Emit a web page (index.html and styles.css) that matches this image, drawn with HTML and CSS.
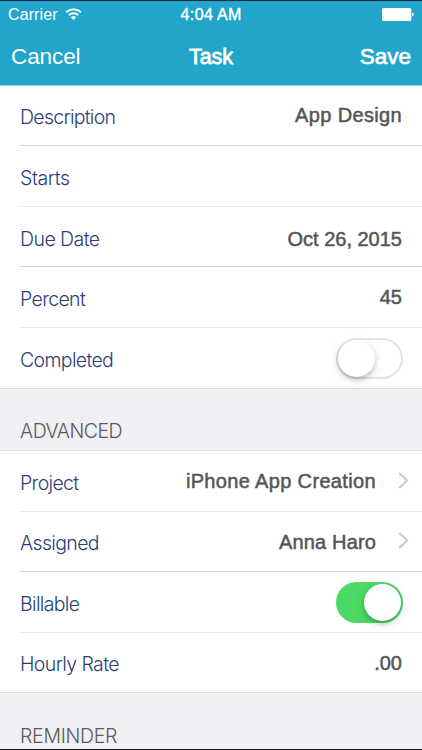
FILE: index.html
```html
<!DOCTYPE html>
<html lang="en">
<head>
<meta charset="utf-8">
<title>Task</title>
<link rel="stylesheet" href="styles.css">
</head>
<body>
<main class="screen">
  <header class="top">
    <div class="status">
      <span class="carrier">Carrier</span>
      <svg class="wifi" width="17" height="13" viewBox="0 0 17 13" fill="none" stroke="#fff" stroke-width="1.8"><path d="M1.1 4.4a10.5 10.5 0 0 1 14.8 0M3.8 7.2a6.6 6.6 0 0 1 9.4 0"/><path d="M5.9 9.4a3.7 3.7 0 0 1 5.2 0L8.5 12z" fill="#fff" stroke="none"/></svg>
      <span class="time">4:04 AM</span>
      <svg class="battery" width="32" height="13" viewBox="0 0 32 13" fill="#fff"><rect width="29.3" height="13" rx="1.5"/><path d="M30 4.5q2 .4 2 2t-2 2z"/></svg>
    </div>
    <nav class="nav">
      <span class="cancel">Cancel</span>
      <h1 class="title">Task</h1>
      <span class="save">Save</span>
    </nav>
  </header>
  <section class="group">
    <div class="row first strong"><span class="label description">Description</span><span class="value top-value">App Design</span></div>
    <div class="row"><span class="label starts">Starts</span></div>
    <div class="row short strong"><span class="label due">Due Date</span><span class="value number date">Oct 26, 2015</span></div>
    <div class="row"><span class="label">Percent</span><span class="value raised number">45</span></div>
    <div class="row last"><span class="label">Completed</span><span class="switch"><span class="knob"></span></span></div>
  </section>
  <h2 class="section"><span class="advanced">ADVANCED</span></h2>
  <section class="group">
    <div class="row"><span class="label">Project</span><span class="value link">iPhone App Creation</span><svg class="chevron" width="11" height="17" viewBox="0 0 11 17"><path d="M1.2 1l8 7.5-8 7.5"/></svg></div>
    <div class="row short strong"><span class="label">Assigned</span><span class="value link anna">Anna Haro</span><svg class="chevron" width="11" height="17" viewBox="0 0 11 17"><path d="M1.2 1l8 7.5-8 7.5"/></svg></div>
    <div class="row"><span class="label">Billable</span><span class="switch on"><span class="knob"></span></span></div>
    <div class="row short last"><span class="label hourly">Hourly Rate</span><span class="value raised number">.00</span></div>
  </section>
  <h2 class="section end"><span>REMINDER</span></h2>
</main>
</body>
</html>
```
FILE: styles.css
```css
* { box-sizing: border-box; }
body { margin: 0; font-family: Inter, "Liberation Sans", sans-serif; background: #fff; }
.screen { width: 422px; height: 750px; overflow: hidden; border-top: 1px solid #122c40; border-bottom: 1px solid #17171d; }
.top { height: 85px; background: #21a5ca; border-bottom: 1px solid #8fd1e5; color: #fff; font-family: "Liberation Sans", Arial, sans-serif; }
.status { height: 28px; padding: 0 8px; display: grid; grid-template-columns: auto 17px 1fr auto 32px; align-items: center; font-size: 16px; }
.carrier { font-size: 16px; letter-spacing: .1px; }
.wifi { margin-left: 7px; margin-top: -2px; }
.time { grid-column: 3; justify-self: start; margin-left: 106px; font-size: 16px; letter-spacing: .35px; -webkit-text-stroke: .4px #fff; white-space: nowrap; }
.battery { grid-column: 5; margin-top: -2px; }
.nav { height: 56px; padding: 0 11px; display: grid; grid-template-columns: 1fr auto 1fr; align-items: center; font-size: 22px; line-height: 28px; }
.cancel { font-size: 22.5px; letter-spacing: -.1px; }
.title { margin: 0; font-size: 21.5px; font-weight: 400; -webkit-text-stroke: .8px #fff; }
.save { justify-self: end; font-size: 22.5px; -webkit-text-stroke: .7px #fff; }
.row { height: 61px; margin-left: 20px; padding-right: 20px; border-bottom: 1px solid #e8e8ea; display: flex; align-items: center; justify-content: space-between; }
.short, .first { height: 60px; }
.strong { border-bottom-color: #d2d2d5; }
.label { font-size: 19.5px; font-weight: 300; line-height: 26px; padding-top: 3px; color: #2c3e76; white-space: nowrap; letter-spacing: -.65px; }
.description { letter-spacing: -.72px; }
.due { letter-spacing: -.55px; padding-top: 5px; }
.starts { letter-spacing: -.4px; }
.hourly { letter-spacing: -.6px; }
.value { font-family: "Liberation Sans", Arial, sans-serif; font-size: 20px; line-height: 26px; padding-top: 3px; color: #555; white-space: nowrap; letter-spacing: .35px; -webkit-text-stroke: .5px #555; }
.raised { padding: 0; }
.top-value { padding: 0 0 2px; }
.number { letter-spacing: 0; }
.date { padding-top: 5px; }
.link { margin-left: auto; margin-right: 22px; padding-top: 0; }
.anna { letter-spacing: .15px; }
.chevron { margin: -2px -7px 0 0; fill: none; stroke: #c7c7cc; stroke-width: 2; }
.last { margin-left: 0; padding-left: 20px; border-bottom-color: #dcdce1; }
.section { height: 62px; margin: 0; padding: 29px 20px 0; background: #efeff4; border-bottom: 1px solid #dcdce1; color: #59595c; font-size: 19.5px; font-weight: 300; line-height: 26px; letter-spacing: -.3px; }
.advanced { letter-spacing: -.5px; }
.end { padding-top: 30px; }
.switch { width: 67px; height: 41px; margin-right: -1px; border: 2px solid #e4e4e4; border-radius: 21px; display: flex; }
.knob { width: 37px; height: 37px; border-radius: 50%; background: #fff; box-shadow: 0 3px 4px rgba(0,0,0,.18), 0 3px 12px rgba(0,0,0,.1); }
.on { background: #4cd964; border-color: #4cd964; justify-content: flex-end; }
```
